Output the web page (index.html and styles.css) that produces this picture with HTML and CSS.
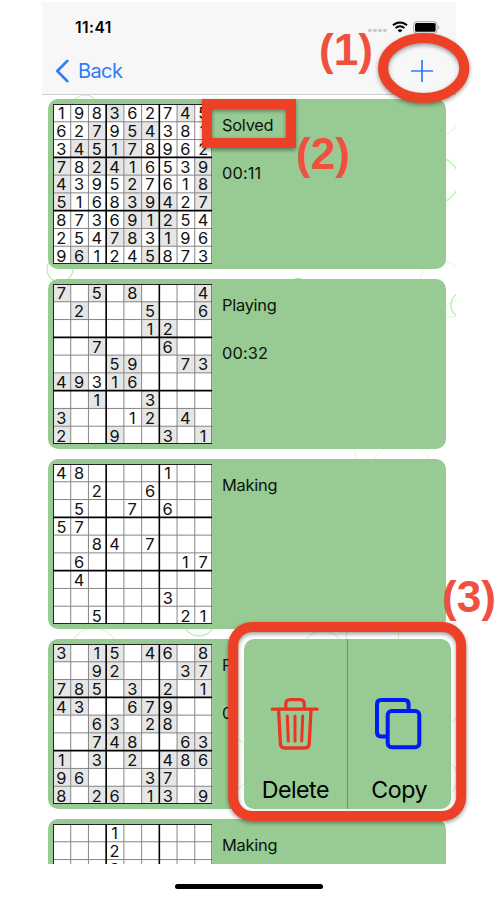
FILE: index.html
```html
<!DOCTYPE html>
<html lang="en">
<head>
<meta charset="utf-8">
<title>Sudoku list</title>
<link rel="stylesheet" href="styles.css">
</head>
<body>
<div class="phone">
  <header class="header">
    <div class="status">
      <span class="clock">11:41</span>
      <span class="signal"><i></i><i></i><i></i><i></i></span>
      <svg class="wifi" width="16" height="12" viewBox="0 0 16 12"><g fill="none" stroke="#000" stroke-width="2"><path d="M1 4.3C5 .4 11 .4 15 4.3"/><path d="M3.6 7.1c2.5-2.4 6.3-2.4 8.8 0"/></g><path d="M8 11.6 5.6 9.2c1.4-1.2 3.4-1.2 4.8 0z"/></svg>
      <svg class="battery" width="27" height="13" viewBox="0 0 27 13"><rect x=".6" y=".6" width="23.4" height="11.6" rx="3" fill="none" stroke="#aaa"/><rect x="2" y="2" width="20.6" height="8.8" rx="1.5"/><path d="M25.2 4.4q2.2 2 0 4z" fill="#aaa"/></svg>
    </div>
    <nav class="nav">
      <a class="back"><svg width="15" height="24" viewBox="0 0 15 24"><path d="M12.3 1.9 2.3 12l10 10.1" fill="none" stroke="#2f7cf6" stroke-width="2.7" stroke-linecap="round" stroke-linejoin="round"/></svg><span>Back</span></a>
      <svg class="add" width="22" height="22" viewBox="0 0 22 22"><path d="M11 .5v21M.5 11h21" stroke="#2f7cf6" stroke-width="1.7" stroke-linecap="round"/></svg>
    </nav>
  </header>
  <main class="list">
    <svg class="bubbles" width="414" height="769" viewBox="42 95 414 769" fill="none" stroke="#b8f4ab">
      <circle cx="85" cy="109" r="14" stroke-width="1.2"/>
      <circle cx="60" cy="269" r="13" stroke-width="1.3"/>
      <circle cx="434" cy="109" r="28" stroke="#d3fac9"/>
      <circle cx="436" cy="180" r="23" stroke-width="1.4"/>
      <circle cx="442" cy="283" r="22" stroke="#d9fad1"/>
      <path d="M424 317h32" stroke="#d9fad1"/>
      <circle cx="298" cy="286" r="7" stroke-width="2" stroke="#8dee79"/>
      <circle cx="464" cy="305" r="13" stroke-width="1.4"/>
      <path d="M354 448q2 5 2 12" stroke="#d9fad1"/>
      <circle cx="402" cy="473" r="31" stroke="#e3fbdc"/>
      <circle cx="94" cy="652" r="24" stroke="#c9f7be"/>
      <circle cx="199" cy="620" r="16" stroke-width="1.3"/>
      <circle cx="323" cy="652" r="21" stroke="#c9f7be"/>
      <path d="M348 628q-2 6-2 12M397 628q2 6 2 12M449 724q7-4 10-10M449 762q7 5 10 14q-3 13-10 19M238 739l7 5M238 789l7-6" stroke="#c9f7be"/>
    </svg>
    <article class="card"><div class="board" data-board="0"></div><div class="info"><p>Solved</p><p class="time">00:11</p></div></article>
    <article class="card"><div class="board" data-board="1"></div><div class="info"><p>Playing</p><p class="time">00:32</p></div></article>
    <article class="card"><div class="board" data-board="2"></div><div class="info"><p>Making</p></div></article>
    <div class="swiped">
      <article class="card"><div class="board" data-board="3"></div><div class="info"><p>P</p><p class="time">0</p></div></article>
      <div class="actions">
        <div class="action">
          <svg width="50" height="54" viewBox="0 0 50 54" fill="none" stroke="#ed3323" stroke-width="3.3" stroke-linecap="round" stroke-linejoin="round"><path d="M2.3 12.2h44.9M15.8 12V7q0-4.4 4.4-4.4h9.7q4.4 0 4.4 4.4v5"/><path d="m8.6 13 1.8 34q.2 4 4.3 4h20.2q4.1 0 4.3-4L41 13"/><path d="m17.3 19 1 25M25 19v25M32.7 19l-1 25" stroke-width="3"/></svg>
          <span>Delete</span>
        </div>
        <div class="action">
          <svg width="50" height="54" viewBox="0 0 50 54" fill="none" stroke="#001cf5" stroke-width="4" stroke-linejoin="round"><rect x="13.7" y="14" width="31.6" height="36.3" rx="4"/><path d="M34.6 14V7.2q0-4.2-4.2-4.2H7.2Q3 3 3 7.2v28q0 4.2 4.2 4.2h6.5"/></svg>
          <span>Copy</span>
        </div>
      </div>
    </div>
    <article class="card"><div class="board" data-board="4"></div><div class="info"><p>Making</p></div></article>
  </main>
  <footer class="home"><div></div></footer>
</div>
<svg class="notes" width="500" height="900" viewBox="0 0 500 900">
  <g class="marks">
    <ellipse cx="423.7" cy="68" rx="40.6" ry="30"/>
    <rect x="207" y="104" width="84" height="39"/>
    <rect x="233.2" y="627" width="228" height="189" rx="19"/>
  </g>
  <text x="319" y="65" textLength="54" lengthAdjust="spacingAndGlyphs">(1)</text>
  <text x="296" y="168.5" textLength="54" lengthAdjust="spacingAndGlyphs">(2)</text>
  <text x="442" y="611.5" textLength="54" lengthAdjust="spacingAndGlyphs">(3)</text>
</svg>
<script src="boards.js"></script>
</body>
</html>
```
FILE: styles.css
```css
* { box-sizing: border-box; }
body { margin: 0; width: 500px; height: 900px; overflow: hidden; background: #fff; color: #0b150a; font-family: Inter, "Liberation Sans", sans-serif; }
.phone { width: 414px; margin: 2px 0 0 42px; }
.header { height: 93px; background: #f7f7f7; border-bottom: 1px solid #cfcfcf; }
.status { display: flex; height: 47px; padding: 3px 16px 0 33px; align-items: center; color: #000; }
.clock { flex: 1; font-size: 15.6px; font-weight: 600; letter-spacing: .45px; }
.signal { display: flex; gap: 1.3px; margin: 7px 5px 0 0; }
.signal i { width: 3.7px; height: 3.7px; border-radius: 1.4px; background: #c8c8c8; }
.wifi { margin-right: 5px; }
.nav { display: flex; justify-content: space-between; align-items: center; height: 44px; padding: 0 23px 0 13px; }
.back { display: flex; align-items: center; gap: 8px; color: #2f7cf6; font-size: 20px; letter-spacing: -.6px; }
.list { position: relative; display: flex; flex-direction: column; gap: 10px; height: 769px; padding: 4px 10.5px 0 5.5px; overflow: hidden; }
.bubbles { position: absolute; left: 0; top: 0; }
.card { position: relative; display: flex; flex: none; gap: 10px; height: 170px; padding: 5px; border-radius: 10px; background: #98cb93; }
.board { position: relative; display: grid; grid-template: repeat(9, minmax(0, 1fr)) / repeat(9, minmax(0, 1fr)); width: 159.5px; height: 160px; background: #fff; flex: none; }
.lines { position: absolute; left: 0; top: 0; }
.cell { display: flex; align-items: center; justify-content: center; font-size: 16.4px; line-height: 16px; color: #111; padding-top: 1px; }
.cell.given { background: #e6e6e6; }
.info { display: flex; flex-direction: column; gap: 28px; padding-top: 10.7px; font-size: 16.4px; line-height: 20px; letter-spacing: -.25px; }
.info p { margin: 0; }
.info .time { letter-spacing: .1px; }
.swiped { display: flex; gap: 6px; height: 170px; flex: none; margin-right: -5px; position: relative; }
.swiped .card { width: 190.5px; border-radius: 10px 0 0 10px; }
.actions { display: flex; width: 207px; border-radius: 10px; background: #98cb93; }
.action { flex: 1; display: flex; flex-direction: column; align-items: center; gap: 24px; padding-top: 58px; color: #000; font-size: 23.2px; line-height: 30px; letter-spacing: -.5px; }
.action + .action { border-left: 1px solid #6f8f6d; }
.home { display: flex; justify-content: center; padding-top: 20px; }
.home div { width: 148px; height: 5px; border-radius: 3px; background: #000; }
.notes { position: absolute; left: 0; top: 0; fill: #f05040; font: bold 45px "Liberation Sans", sans-serif; }
.marks { fill: none; stroke: #ec4027; stroke-width: 10; filter: drop-shadow(0 2px 2px #0006); }
```
FILE: boards.js
```js
// Each row is nine characters, "." for an empty cell; "x" in masks marks a given.
const boards = [
  { rows: "198362745 627954381 345178962 782416539 439527618 516839427 873691254 254783196 961245873",
    mask: "...x...x. ..x.xx... .xxxx.... x.xxx...x x...x...x x...xxx.x ....xxx.. ...xx.x.. .x...x..." },
  { rows: "7.5.8...4 .2...5..6 .....12.. ..7...6.. ...59..73 49316.... ..1..3... 3...12.4. 2..9..3.1",
    mask: "x.x.x...x .x...x..x .....xx.. ..x...x.. ...xx..xx xx.xx.... ..x..x... x....x.x. x..x..x.x" },
  { rows: "48....1.. ..2..6... .5..7.6.. 57....... ..84.7... .6.....17 .4....... ......3.. ..5....21", mask: "" },
  { rows: "3.15.46.8 ..92...37 785.3.2.1 43..679.. ..63.28.. ..748..63 1.3.2.486 96...37.. 8.26.13.9",
    mask: "x.xx.xx.x ..xx...xx xxx.x.x.x xx..xxx.. ..xx.xx.. ..xxx..xx x.x.x.xxx xx...xx.. x.xx.xx.x" },
  { rows: "...1..... ...2..... ...3..... ......... ......... ......... ......... ......... .........", mask: "" }
];
const path = (indexes) => indexes.map(i => {
  const x = i * 159.5 / 9, y = i * 160 / 9;
  return `M${x} 0V160M0 ${y}H159.5`;
}).join("");
const lines = `<svg class="lines" width="159.5" height="160" viewBox="0 0 159.5 160" fill="none">
  <path d="${path([1, 2, 4, 5, 7, 8])}" stroke="#858585"/>
  <rect x=".5" y=".5" width="158.5" height="159" stroke="#222"/>
  <path d="${path([3, 6])}" stroke="#000" stroke-width="1.6"/></svg>`;
document.querySelectorAll(".board").forEach(el => {
  const board = boards[el.dataset.board];
  const mask = board.mask.replace(/ /g, "");
  [...board.rows.replace(/ /g, "")].forEach((digit, i) => {
    const cell = document.createElement("span");
    cell.className = mask[i] === "x" ? "cell given" : "cell";
    cell.textContent = digit === "." ? "" : digit;
    el.append(cell);
  });
  el.insertAdjacentHTML("beforeend", lines);
});
```
